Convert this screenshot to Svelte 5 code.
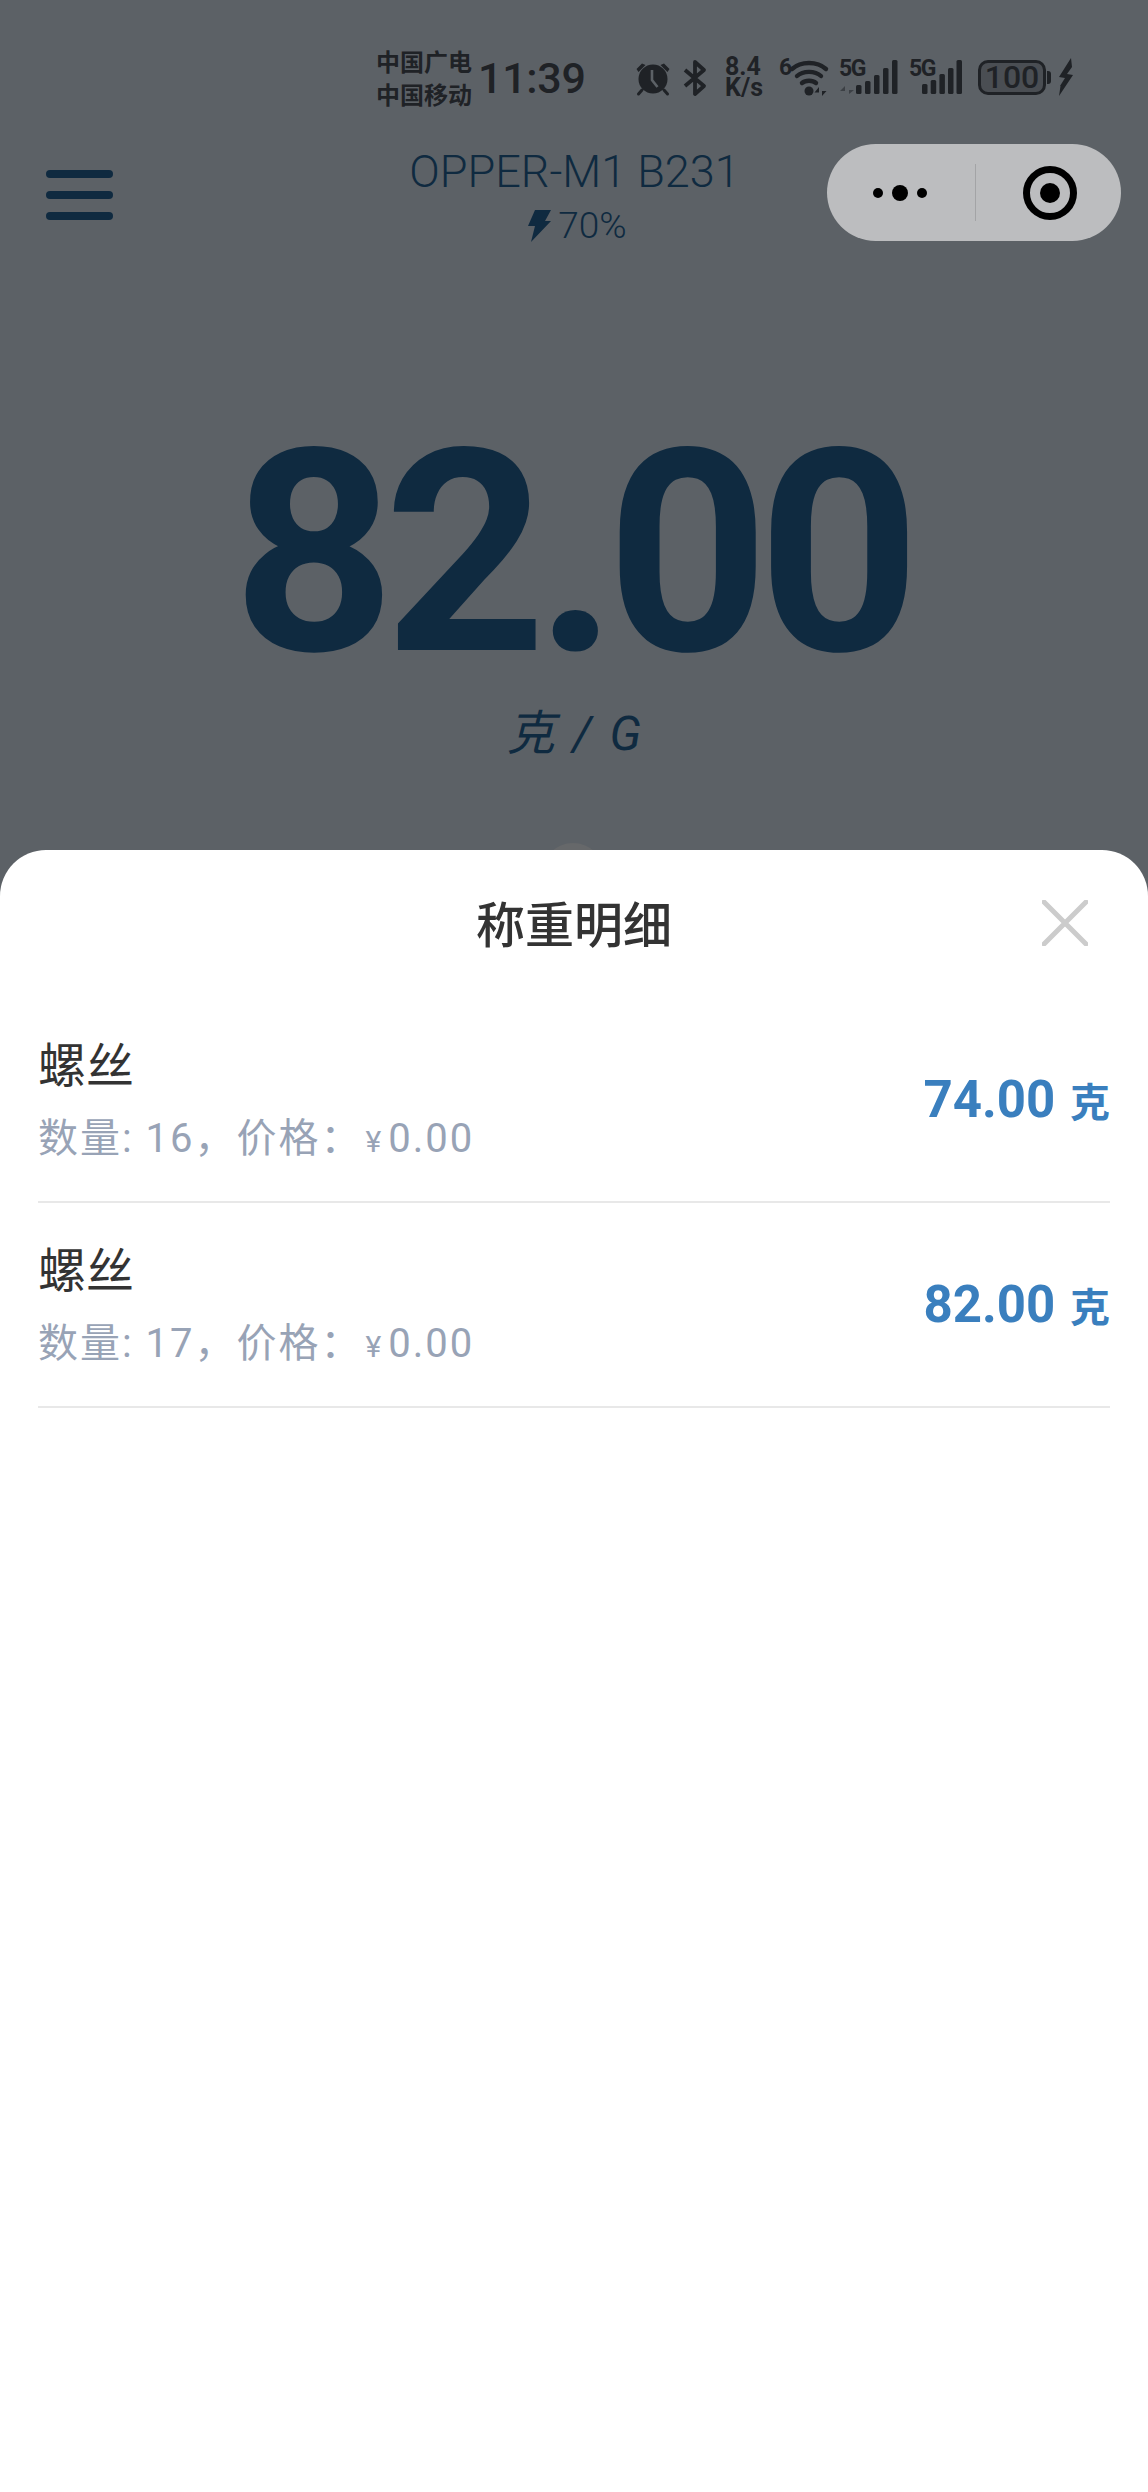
<script>
  let rows = [
    { name: '螺丝', count: 16, price: '0.00', weight: '74.00' },
    { name: '螺丝', count: 17, price: '0.00', weight: '82.00' }
  ];
</script>

<div class="page">
  <div class="top">
    <div class="status">
      <div class="carriers"><span>中国广电</span><span>中国移动</span></div>
      <div class="time">11:39</div>
      <svg class="alarm" width="36" height="34" viewBox="0 0 36 34">
        <circle cx="18" cy="18" r="14.500" fill="#1f2226"/>
        <path d="M1.500 8 7 2.500l3.500 1.500-7 7zM34.500 8 29 2.500 25.500 4l7 7z" fill="#1f2226"/>
        <path d="M7 29l-3.500 4M29 29l3.500 4" stroke="#1f2226" stroke-width="3" stroke-linecap="round"/>
        <path d="M17 9v10l5.500 7" stroke="#5c6166" stroke-width="2.600" fill="none"/>
      </svg>
      <svg class="bt" width="24" height="36" viewBox="0 0 24 36">
        <path d="M2 10l19 16-9 8V2l9 8L2 26" stroke="#1f2226" stroke-width="3.800" fill="none" stroke-linejoin="round"/>
      </svg>
      <div class="speed"><span>8.4</span><span>K/s</span></div>
      <svg class="wifi" width="50" height="36" viewBox="0 0 50 36">
        <text x="0" y="15" class="tiny">6</text>
        <path d="M13 9C22 1 38 1 47 9M18 16c6-5.500 18-5.500 24 0M23 23c3.500-3 10.500-3 14 0" stroke="#1f2226" stroke-width="4.400" fill="none" stroke-linecap="round"/>
        <circle cx="30" cy="31" r="4.500" fill="#1f2226"/>
        <path d="M40 36v-9l-4.500 5.500H40zM43 27v9l4.500-5H43z" fill="#1f2226"/>
      </svg>
      <svg class="sim" width="60" height="36" viewBox="0 0 60 36">
        <text x="0" y="16" class="tiny">5G</text>
        <path d="M6 34v-8l-5 5h5zM10 26v8l5-4h-5z" fill="#3c4045"/>
        <g fill="#1f2226">
          <rect x="17" y="25" width="5.500" height="9" rx="1.500"/>
          <rect x="26" y="21" width="5.500" height="13" rx="1.500"/>
          <rect x="35" y="15" width="5.500" height="19" rx="1.500"/>
          <rect x="44" y="8" width="5.500" height="26" rx="1.500"/>
          <rect x="53" y="0" width="5.500" height="34" rx="1.500"/>
        </g>
      </svg>
      <svg class="sim2" width="53" height="36" viewBox="0 0 53 36">
        <text x="0" y="16" class="tiny">5G</text>
        <g fill="#1f2226">
          <rect x="13" y="24" width="5.500" height="10" rx="1.500"/>
          <rect x="21.700" y="20" width="5.500" height="14" rx="1.500"/>
          <rect x="30.400" y="14" width="5.500" height="20" rx="1.500"/>
          <rect x="39" y="8" width="5.500" height="26" rx="1.500"/>
          <rect x="47.500" y="0" width="5.500" height="34" rx="1.500"/>
        </g>
      </svg>
      <div class="battery">100</div>
      <div class="nub"></div>
      <svg class="bolt" width="16" height="38" viewBox="0 0 16 38">
        <path d="M13 0 1 19l6 1-5 8 .5 0L1 38 15 17l-6-1 5-7z" fill="#1f2226"/>
      </svg>
    </div>

    <div class="header">
      <div class="menu"><i></i><i></i><i></i></div>
      <div class="device">
        <div class="device-name">OPPER-M1 B231</div>
        <div class="charge">
          <svg width="23" height="32" viewBox="0 0 23 32">
            <path d="M7 0h16l-6 11h6L3 32l4-16H0z" fill="#0f2a40"/>
          </svg>
          <span>70%</span>
        </div>
      </div>
      <div class="capsule">
        <div class="dots"><i></i><b></b><i></i></div>
        <div class="line"></div>
        <svg width="54" height="54" viewBox="0 0 54 54">
          <circle cx="27" cy="27" r="23.500" fill="none" stroke="#000" stroke-width="7"/>
          <circle cx="27" cy="27" r="10" fill="#000"/>
        </svg>
      </div>
    </div>

    <div class="reading">82.00</div>
    <div class="unit">克 / G</div>
    <div class="peek"></div>
  </div>

  <div class="sheet">
    <div class="sheet-head">
      <span>称重明细</span>
      <svg class="close" width="46" height="46" viewBox="0 0 46 46">
        <path d="M2 2l42 42M44 2L2 44" stroke="#cccccc" stroke-width="5" stroke-linecap="round"/>
      </svg>
    </div>
    <div class="list">
      {#each rows as r}
        <div class="row">
          <div>
            <div class="name">{r.name}</div>
            <div class="meta">数量: {r.count}，价格：<small>¥</small>{r.price}</div>
          </div>
          <div class="weight">{r.weight} <small>克</small></div>
        </div>
      {/each}
    </div>
  </div>
</div>

<style>
  :global(body) {
    margin: 0;
    background: #fff;
  }

  .page {
    width: 1148px;
    height: 2492px;
    display: flex;
    flex-direction: column;
    overflow: hidden;
    background: #5c6166;
    font-family: Roboto, "Noto Sans CJK SC", sans-serif;
  }

  .top {
    height: 850px;
    position: relative;
    flex: none;
  }

  .status {
    height: 144px;
    box-sizing: border-box;
    padding: 47px 0 0 376px;
    display: flex;
    align-items: flex-start;
    color: #1f2226;
  }

  .status svg {
    overflow: visible;
  }

  .carriers {
    width: 102px;
    display: flex;
    flex-direction: column;
    font-size: 24px;
    line-height: 33px;
    font-weight: 700;
    white-space: nowrap;
  }

  .time {
    width: 157px;
    margin-top: 6px;
    font-size: 43px;
    line-height: 50px;
    letter-spacing: -0.3px;
    font-weight: 500;
  }

  .alarm { margin-top: 14px; }
  .bt { margin: 13px 0 0 12px; }

  .speed {
    width: 44px;
    margin: 9px 0 0 18px;
    display: flex;
    flex-direction: column;
    font-size: 25px;
    line-height: 21px;
    font-weight: 700;
  }

  .wifi { margin: 13px 0 0 10px; }
  .sim { margin: 13px 0 0 10px; }
  .sim2 { margin: 13px 0 0 10px; }

  .tiny {
    font-size: 23px;
    font-weight: 700;
    letter-spacing: -1.500px;
    fill: #1f2226;
  }

  .battery {
    width: 68px;
    height: 35px;
    margin: 13px 0 0 16px;
    box-sizing: border-box;
    border: 3.500px solid #1f2226;
    border-radius: 10px;
    background: #4a4e53;
    font-size: 32px;
    font-weight: 500;
    line-height: 28px;
    text-align: center;
  }

  .nub {
    width: 4px;
    height: 13px;
    margin: 24px 0 0 1px;
    border-radius: 0 3px 3px 0;
    background: #1f2226;
  }

  .bolt { margin: 11px 0 0 7px; }

  .header {
    padding: 0 27px 0 28px;
    display: grid;
    grid-template-columns: 1fr auto 1fr;
    grid-template-rows: 97px;
    align-items: center;
  }

  .menu {
    margin: 4px 0 0 18px;
    width: 67px;
    display: flex;
    flex-direction: column;
    gap: 13px;
  }

  .menu i {
    height: 8px;
    border-radius: 4px;
    background: #0f2a40;
  }

  .device {
    color: #0f2a40;
    text-align: center;
    font-weight: 300;
  }

  .device-name {
    font-size: 45px;
    line-height: 52px;
    margin-top: 6px;
    white-space: nowrap;
  }

  .charge {
    display: flex;
    justify-content: center;
    align-items: center;
    gap: 7px;
    margin: 8px 0 0 6px;
    font-size: 37px;
    line-height: 40px;
  }

  .capsule {
    justify-self: end;
    width: 294px;
    height: 97px;
    border-radius: 49px;
    background: #bcbdbf;
    display: flex;
    align-items: center;
    position: relative;
  }

  .dots {
    margin-left: 46px;
    display: flex;
    align-items: center;
    gap: 9px;
  }

  .dots i {
    width: 10px;
    height: 10px;
    border-radius: 50%;
    background: #000;
  }

  .dots b {
    width: 16px;
    height: 16px;
    border-radius: 50%;
    background: #000;
  }

  .line {
    width: 1px;
    height: 57px;
    margin-left: 48px;
    background: #a3a4a6;
  }

  .capsule svg {
    margin-left: 47px;
  }

  .reading {
    margin: 162px 0 0 -6px;
    text-align: center;
    color: #0f2a40;
    font-size: 283px;
    line-height: 300px;
    font-weight: 700;
    letter-spacing: -11px;
    white-space: nowrap;
  }

  .unit {
    margin: 3px 0 0 3px;
    text-align: center;
    color: #0f2a40;
    font-size: 48px;
    line-height: 56px;
    font-style: italic;
    font-weight: 400;
    letter-spacing: 3px;
    white-space: pre;
  }

  .peek {
    position: absolute;
    left: 541px;
    top: 843px;
    width: 64px;
    height: 64px;
    border-radius: 50%;
    background: #66686a;
  }

  .sheet {
    flex: 1;
    position: relative;
    background: #fff;
    border-radius: 46px 46px 0 0;
  }

  .sheet-head {
    height: 148px;
    box-sizing: border-box;
    padding-bottom: 5px;
    display: flex;
    justify-content: center;
    align-items: center;
    color: #333;
    font-size: 49px;
    font-weight: 500;
    position: relative;
  }

  .close {
    position: absolute;
    right: 60px;
    top: 50px;
  }

  .list {
    padding: 0 38px;
  }

  .row {
    height: 205px;
    box-sizing: border-box;
    border-bottom: 2px solid #e8e8e8;
    display: flex;
    justify-content: space-between;
    align-items: center;
  }

  .name {
    color: #333;
    font-size: 48px;
    line-height: 64px;
    margin-bottom: -2px;
  }

  .meta {
    color: #98a3b6;
    font-size: 40px;
    line-height: 56px;
    letter-spacing: 2px;
    margin: 14px 0 -6px;
    white-space: nowrap;
  }

  .meta small {
    font-size: 30px;
    margin: 0 5px 0 3px;
  }

  .weight {
    color: #3a7fbe;
    font-size: 51px;
    font-weight: 700;
    white-space: nowrap;
  }

  .weight small {
    font-size: 40px;
    margin-left: 2px;
  }
</style>
